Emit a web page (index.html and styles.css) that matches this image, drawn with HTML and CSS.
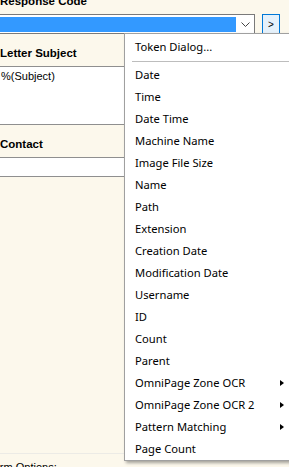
FILE: index.html
```html
<!DOCTYPE html>
<html lang="en">
<head>
  <meta charset="UTF-8">
  <meta name="viewport" content="width=device-width, initial-scale=1.0">
  <title>Response Code</title>
  <link rel="stylesheet" href="styles.css">
</head>
<body>
  <div class="form-panel">
    <div class="field-label">Response Code</div>
    <div class="combo-row">
      <div class="combo">
        <div class="combo-fill"></div>
        <div class="combo-arrow">
          <svg width="9" height="5" viewBox="0 0 9 5"><path d="M0.5 0.5 L4.5 4.5 L8.5 0.5" fill="none" stroke="#444" stroke-width="1"/></svg>
        </div>
      </div>
      <button class="token-btn">&gt;</button>
    </div>

    <div class="grid">
      <div class="grid-head">Letter Subject</div>
      <div class="grid-cell tall">%(Subject)</div>
      <div class="grid-head">Contact</div>
      <div class="grid-cell"></div>
    </div>

    <div class="options">Form Options:</div>
  </div>

  <!-- token popup menu -->
  <div class="menu">
    <div class="menu-item">Token Dialog...</div>
    <div class="menu-sep"></div>
    <div class="menu-item">Date</div>
    <div class="menu-item">Time</div>
    <div class="menu-item">Date Time</div>
    <div class="menu-item">Machine Name</div>
    <div class="menu-item">Image File Size</div>
    <div class="menu-item">Name</div>
    <div class="menu-item">Path</div>
    <div class="menu-item">Extension</div>
    <div class="menu-item">Creation Date</div>
    <div class="menu-item">Modification Date</div>
    <div class="menu-item">Username</div>
    <div class="menu-item">ID</div>
    <div class="menu-item">Count</div>
    <div class="menu-item">Parent</div>
    <div class="menu-item">OmniPage Zone OCR <span class="sub-arrow"></span></div>
    <div class="menu-item">OmniPage Zone OCR 2 <span class="sub-arrow"></span></div>
    <div class="menu-item">Pattern Matching <span class="sub-arrow"></span></div>
    <div class="menu-item">Page Count</div>
  </div>
</body>
</html>
```

FILE: styles.css
```css
html, body {
  margin: 0;
  padding: 0;
}

body {
  width: 289px;
  height: 467px;
  overflow: hidden;
  position: relative;
  background-color: #fcf8ec;
  font-family: "Liberation Sans", Arial, sans-serif;
  color: #000000;
}

.form-panel {
  display: flex;
  flex-direction: column;
}

.field-label {
  font-weight: bold;
  font-size: 11.5px;
  line-height: 14px;
  height: 14px;
  margin-top: -6px;
}

.combo-row {
  display: flex;
  gap: 7px;
  margin-top: 6px;
  padding-right: 9px;
  margin-left: -4px;
}

.combo {
  flex: 1;
  display: flex;
  height: 20px;
  box-sizing: border-box;
  border: 1px solid #7a7a7a;
  background-color: #ffffff;
  padding: 2px 0 1px 2px;
}

.combo-fill {
  flex: 1;
  background-color: #3399ff;
}

.combo-arrow {
  width: 18px;
  display: flex;
  align-items: center;
  justify-content: center;
}

.token-btn {
  width: 18px;
  height: 20px;
  box-sizing: border-box;
  border: 1px solid #0078d7;
  background-color: #e5f1fb;
  padding: 2px 0 0 0;
  font-family: "Liberation Sans", Arial, sans-serif;
  font-size: 10px;
  line-height: 14px;
  color: #000000;
}

.grid {
  display: flex;
  flex-direction: column;
}

.grid-head {
  height: 33px;
  box-sizing: border-box;
  padding-top: 12px;
  font-weight: bold;
  font-size: 11.5px;
  line-height: 14px;
  border-bottom: 1px solid #8f8f8f;
}

.grid-cell {
  height: 19px;
  box-sizing: border-box;
  background-color: #ffffff;
  border-bottom: 1px solid #8f8f8f;
  font-size: 11px;
  line-height: 13px;
  padding: 3px 0 0 1px;
}

.grid-cell.tall {
  height: 58px;
}

.options {
  margin-top: 276px;
  border-top: 1px solid #ecebe6;
  padding-top: 7px;
  font-size: 11px;
  line-height: 13px;
  text-indent: -13px;
  white-space: nowrap;
}

.menu {
  position: absolute;
  left: 124px;
  top: 33px;
  width: 170px;
  box-sizing: border-box;
  border: 1px solid #a0a0a0;
  background-color: #ffffff;
  padding: 2px 0 0 0;
  box-shadow: 2px 2px 3px rgba(0, 0, 0, 0.35);
  font-family: "Noto Sans", sans-serif;
  font-size: 11.2px;
}

.menu-item {
  height: 22px;
  line-height: 22px;
  padding: 0 9px 0 10px;
  display: flex;
  justify-content: space-between;
  align-items: center;
  white-space: nowrap;
}

.menu-sep {
  height: 1px;
  margin: 3px 0 2px 7px;
  background-color: #bdbdbd;
}

.sub-arrow {
  width: 0;
  height: 0;
  border-left: 4px solid #000000;
  border-top: 3.5px solid transparent;
  border-bottom: 3.5px solid transparent;
}
```
